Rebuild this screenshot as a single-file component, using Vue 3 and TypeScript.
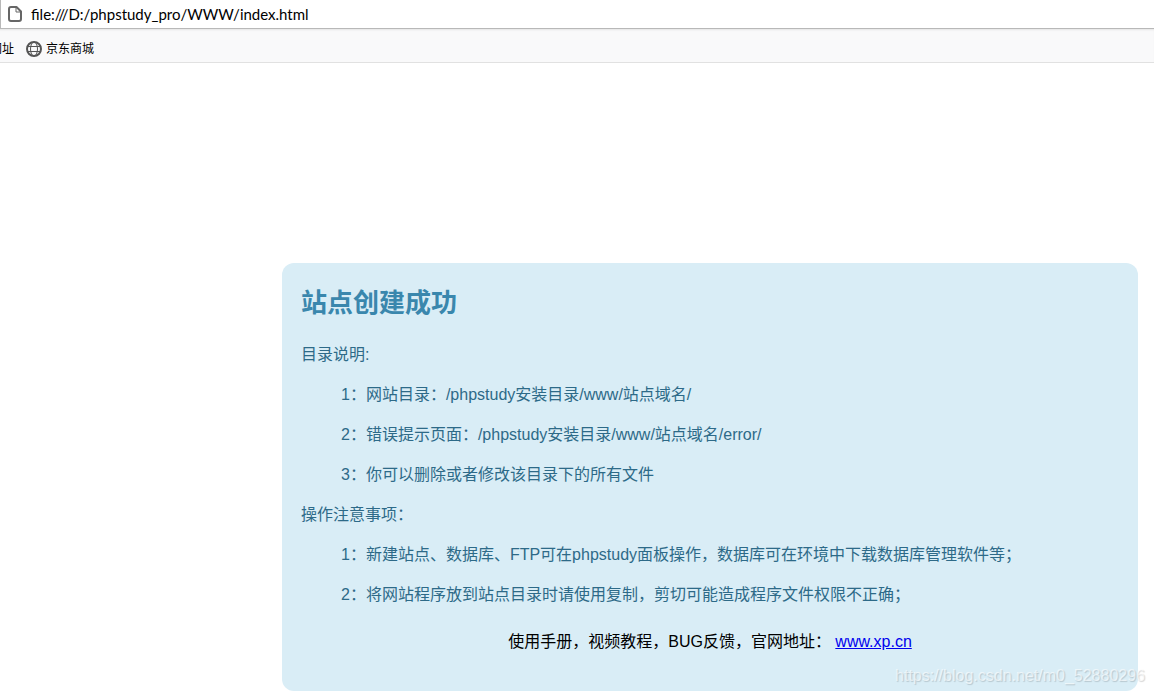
<script setup lang="ts">
import { ref } from 'vue'

interface Section {
  heading: string
  items: string[]
}

const address = ref('file:///D:/phpstudy_pro/WWW/index.html')

const sections: Section[] = [
  {
    heading: '目录说明:',
    items: [
      '1：网站目录：/phpstudy安装目录/www/站点域名/',
      '2：错误提示页面：/phpstudy安装目录/www/站点域名/error/',
      '3：你可以删除或者修改该目录下的所有文件',
    ],
  },
  {
    heading: '操作注意事项：',
    items: [
      '1：新建站点、数据库、FTP可在phpstudy面板操作，数据库可在环境中下载数据库管理软件等；',
      '2：将网站程序放到站点目录时请使用复制，剪切可能造成程序文件权限不正确；',
    ],
  },
]
</script>

<template>
  <div class="browser" lang="zh-CN">
    <div class="address-bar">
      <svg class="page-icon" viewBox="0 0 16 16" aria-hidden="true">
        <path d="M4 1h5.500L14 5.500V13a2 2 0 0 1-2 2H4a2 2 0 0 1-2-2V3a2 2 0 0 1 2-2z" />
        <path d="M9 1.500V6h4.500" />
      </svg>
      <input v-model="address" class="address" type="text" aria-label="地址" spellcheck="false" />
    </div>

    <nav class="bookmarks">
      <a class="bookmark" href="#">网址</a>
      <a class="bookmark" href="#">
        <svg class="globe" viewBox="0 0 16 16" aria-hidden="true">
          <circle cx="8" cy="8" r="7" class="rim" />
          <ellipse cx="8" cy="8" rx="3.500" ry="7" />
          <path d="M2 5.500h12M2 10.500h12" />
        </svg>
        京东商城
      </a>
    </nav>

    <main class="page">
      <article class="card">
        <h1 class="title">站点创建成功</h1>
        <section v-for="section in sections" :key="section.heading">
          <h2 class="line">{{ section.heading }}</h2>
          <p v-for="item in section.items" :key="item" class="line item">{{ item }}</p>
        </section>
        <p class="support">使用手册，视频教程，BUG反馈，官网地址： <a href="#">www.xp.cn</a></p>
      </article>
    </main>

    <div class="watermark">https://blog.csdn.net/m0_52880296</div>
  </div>
</template>

<style>
body {
  margin: 0;
  background: #fff;
}
</style>

<style scoped>
.browser {
  position: relative;
  overflow: hidden;
  min-height: 100vh;
  box-sizing: border-box;
  font-family: "Liberation Sans", Arial, "Noto Sans CJK SC", sans-serif;
  font-size: 16px;
  color: #000;
}

.address-bar {
  display: flex;
  align-items: center;
  gap: 8px;
  height: 28px;
  padding-left: 6px;
  border-left: 1px solid #b8b8b8;
  border-bottom: 1px solid #b8b8b8;
  background: #fff;
}

.page-icon {
  flex: none;
  width: 16px;
  height: 16px;
  fill: none;
  stroke: #666;
  stroke-width: 2;
  stroke-linejoin: round;
}

.page-icon path + path {
  stroke-width: 1;
}

.address {
  flex: 1;
  min-width: 0;
  padding: 0;
  border: 0;
  outline: 0;
  background: transparent;
  font: 15px/20px Lato, "Open Sans", sans-serif;
  color: #000;
}

.bookmarks {
  display: flex;
  align-items: center;
  gap: 12px;
  height: 34px;
  margin-left: -10px;
  padding-top: 6px;
  box-sizing: border-box;
  border-bottom: 1px solid #e1e1e1;
  background: #f9f9fa;
  box-shadow: inset 0 2px 2px -1px #e4e4e4;
}

.bookmark {
  display: flex;
  align-items: center;
  gap: 4px;
  font-size: 12px;
  line-height: 16px;
  color: #000;
  text-decoration: none;
}

.globe {
  width: 16px;
  height: 16px;
  fill: none;
  stroke: #555;
  stroke-width: 1;
}

.globe .rim {
  stroke-width: 2;
}

.page {
  padding: 200px 16px 4px 282px;
}

.card {
  box-sizing: border-box;
  padding: 20px 19px 37px;
  border-radius: 12px;
  background: #d9edf6;
  color: #2d6a88;
}

.title {
  margin: 0 0 22px;
  font-size: 26px;
  font-weight: bold;
  line-height: 40px;
  color: #3a87ad;
}

.line {
  margin: 0 0 20px;
  font-size: 16px;
  font-weight: normal;
  line-height: 20px;
}

.item {
  padding-left: 40px;
}

.support {
  margin: 25px 0 0;
  line-height: 24px;
  text-align: center;
  color: #000;
}

.support a {
  color: #00e;
}

.watermark {
  position: absolute;
  right: 9px;
  bottom: 9px;
  line-height: 20px;
  color: rgba(255, 255, 255, 0.6);
  text-shadow: 1px 1px 1px rgba(0, 0, 0, 0.16);
  pointer-events: none;
}
</style>
